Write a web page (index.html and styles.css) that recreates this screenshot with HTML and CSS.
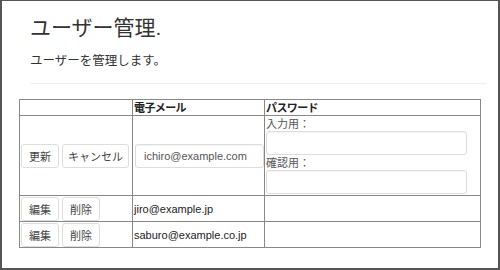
FILE: index.html
```html
<!DOCTYPE html>
<html lang="ja">
<head>
<meta charset="utf-8">
<title>ユーザー管理</title>
<link rel="stylesheet" href="styles.css">
</head>
<body>
<div class="page">
  <header class="intro">
    <h1 class="title">ユーザー管理.</h1>
    <p class="lead">ユーザーを管理します。</p>
    <hr class="rule">
  </header>
  <table class="users">
    <colgroup>
      <col class="c-actions">
      <col class="c-mail">
      <col class="c-pass">
    </colgroup>
    <thead>
      <tr>
        <th></th>
        <th>電子メール</th>
        <th>パスワード</th>
      </tr>
    </thead>
    <tbody>
      <tr class="editing">
        <td class="actions"><button class="btn">更新</button><button class="btn btn-wide">キャンセル</button></td>
        <td><input class="field field-mail" type="text" value="ichiro@example.com"></td>
        <td class="pass">
          <label class="lbl">入力用：</label>
          <input class="field field-pass" type="password">
          <label class="lbl">確認用：</label>
          <input class="field field-pass" type="password">
        </td>
      </tr>
      <tr>
        <td class="actions"><button class="btn">編集</button><button class="btn">削除</button></td>
        <td>jiro@example.jp</td>
        <td></td>
      </tr>
      <tr>
        <td class="actions"><button class="btn">編集</button><button class="btn">削除</button></td>
        <td>saburo@example.co.jp</td>
        <td></td>
      </tr>
    </tbody>
  </table>
</div>
</body>
</html>
```

FILE: styles.css
```css
html, body {
  margin: 0;
  padding: 0;
}
body {
  width: 500px;
  height: 270px;
  box-sizing: border-box;
  border: 2px solid #555;
  border-top-width: 1px;
  background: #fff;
  font-family: "Liberation Sans", "Noto Sans CJK JP", sans-serif;
  color: #333;
  overflow: hidden;
}
.page {
  padding: 0 0 0 17px;
}
.intro {
  padding-left: 11px;
  padding-right: 12px;
}
.title {
  margin: 14px 0 0;
  font-size: 21px;
  font-weight: normal;
  line-height: 26px;
  color: #333;
}
.lead {
  margin: 10px 0 0;
  font-size: 12.5px;
  line-height: 20px;
  color: #333;
}
.rule {
  margin: 12px 0 0;
  border: 0;
  border-top: 1px solid #eee;
  height: 0;
}
.users {
  margin-top: 15px;
  width: 461px;
  border-collapse: collapse;
  table-layout: fixed;
  font-size: 11px;
  color: #222;
}
.c-actions { width: 113px; }
.c-mail { width: 132px; }
.c-pass { width: 216px; }
.users th,
.users td {
  border: 1px solid #888;
  padding: 1px 0 0 1px;
  text-align: left;
  vertical-align: middle;
  line-height: 14px;
}
.users th {
  font-weight: bold;
  padding-top: 1px;
  padding-bottom: 0;
  height: 14px;
  letter-spacing: -0.6px;
}
.actions {
  white-space: nowrap;
}
.btn {
  height: 24px;
  margin: 0 3px 0 0;
  padding: 0 7px;
  font-family: inherit;
  font-size: 11px;
  color: #444;
  background: #fff;
  border: 1px solid #ddd;
  border-radius: 3px;
  vertical-align: middle;
  box-sizing: border-box;
}
.btn-wide {
  padding: 0 5px;
  width: 67px;
}
.field {
  display: block;
  box-sizing: border-box;
  height: 24px;
  border: 1px solid #ddd;
  border-radius: 3px;
  box-shadow: inset 0 1px 1px rgba(0,0,0,0.05);
  font-family: inherit;
  font-size: 11px;
  color: #555;
  background: #fff;
}
.field-mail {
  width: 129px;
  padding: 0 8px;
  margin-left: 1px;
}
.pass {
  padding-top: 1px;
  padding-bottom: 1px;
}
.lbl {
  display: block;
  color: #555;
  line-height: 14px;
}
.field-pass {
  width: 201px;
  margin: 0 0 1px 0;
}
```
